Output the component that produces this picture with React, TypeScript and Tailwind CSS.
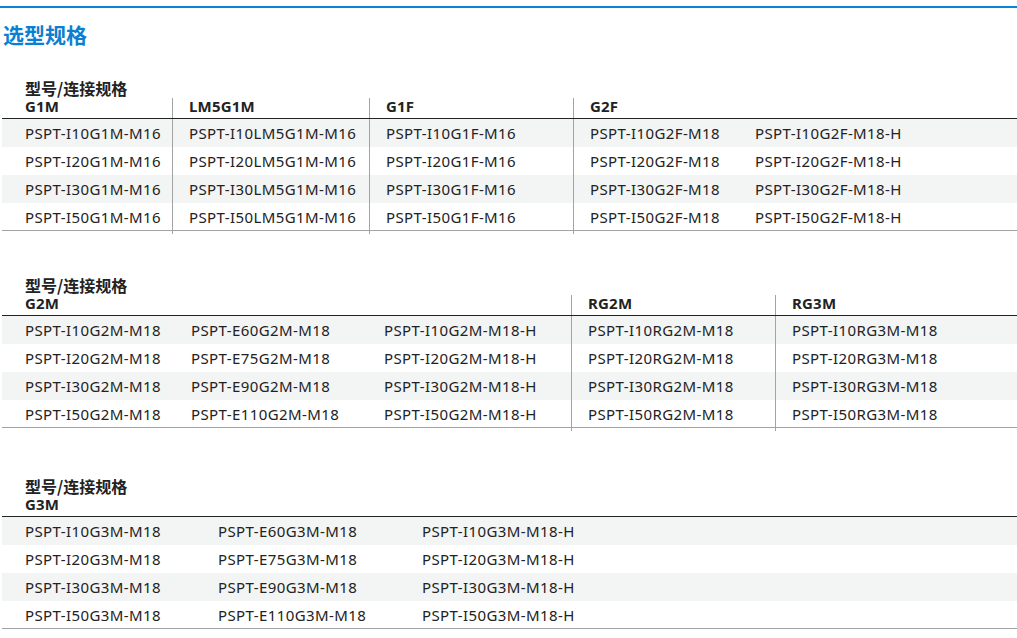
type HeadCell = { label: string; span?: number; border?: boolean };

interface SpecTableProps {
  grid: string;
  heads: HeadCell[];
  borders: boolean[];
  rows: string[][];
  className?: string;
}

const SpecTable: React.FC<SpecTableProps> = ({ grid, heads, borders, rows, className }) => {
  return (
    <div className={`ml-[2px] ${className ?? ""}`}>
      <div className="pl-[23px] font-['Noto_Sans_CJK_SC',sans-serif] text-[16px] font-bold leading-[19px] text-[#222]">
        型号/连接规格
      </div>
      <div className={`grid ${grid} h-[21px] border-b border-[#222]`}>
        {heads.map((h, i) => (
          <div
            key={i}
            className={`${h.span === 3 ? "col-span-3" : h.span === 2 ? "col-span-2" : ""} ${
              h.border ? "border-l border-[#a3a3a3] pl-[16px]" : i === 0 ? "pl-[23px]" : "pl-[17px]"
            } text-[15px] font-bold leading-[17px] tracking-[0.2px] text-[#222]`}
          >
            {h.label}
          </div>
        ))}
      </div>
      {rows.map((row, r) => (
        <div
          key={r}
          className={`grid ${grid} h-[28px] ${r % 2 === 0 ? "bg-[#f3f4f4]" : "bg-white"} ${
            r === rows.length - 1 ? "border-b border-[#a3a3a3]" : ""
          }`}
        >
          {row.map((cell, c) => (
            <div
              key={c}
              className={`${
                borders[c] ? "border-l border-[#a3a3a3] pl-[16px]" : c === 0 ? "pl-[23px]" : "pl-[17px]"
              } pb-[3px] text-[15px] leading-[28px] tracking-[0.4px] whitespace-nowrap text-[#222]`}
            >
              {cell}
            </div>
          ))}
        </div>
      ))}
    </div>
  );
};

const nums = ["10", "20", "30", "50"];
const ext = ["60", "75", "90", "110"];

export default function App() {
  return (
    <div className="min-h-[638px] w-[1017px] bg-white font-['Noto_Sans','Noto_Sans_CJK_SC',sans-serif]">
      <div className="pt-[6px]">
        <div className="h-[2px] bg-[#0a84d4]" />
      </div>
      <h1 className="mt-[13px] pl-[3px] text-[21px] font-bold leading-[28px] text-[#0b7fd1]">选型规格</h1>

      <SpecTable
        className="mt-[30px]"
        grid="grid-cols-[170px_197px_204px_165px_1fr]"
        heads={[
          { label: "G1M" },
          { label: "LM5G1M", border: true },
          { label: "G1F", border: true },
          { label: "G2F", border: true },
          { label: "" },
        ]}
        borders={[false, true, true, true, false]}
        rows={nums.map((n) => [
          `PSPT-I${n}G1M-M16`,
          `PSPT-I${n}LM5G1M-M16`,
          `PSPT-I${n}G1F-M16`,
          `PSPT-I${n}G2F-M18`,
          `PSPT-I${n}G2F-M18-H`,
        ])}
      />

      <SpecTable
        className="mt-[45px]"
        grid="grid-cols-[172px_193px_204px_204px_1fr]"
        heads={[
          { label: "G2M", span: 3 },
          { label: "RG2M", border: true },
          { label: "RG3M", border: true },
        ]}
        borders={[false, false, false, true, true]}
        rows={nums.map((n, i) => [
          `PSPT-I${n}G2M-M18`,
          `PSPT-E${ext[i]}G2M-M18`,
          `PSPT-I${n}G2M-M18-H`,
          `PSPT-I${n}RG2M-M18`,
          `PSPT-I${n}RG3M-M18`,
        ])}
      />

      <SpecTable
        className="mt-[49px]"
        grid="grid-cols-[199px_204px_1fr]"
        heads={[{ label: "G3M", span: 3 }]}
        borders={[false, false, false]}
        rows={nums.map((n, i) => [
          `PSPT-I${n}G3M-M18`,
          `PSPT-E${ext[i]}G3M-M18`,
          `PSPT-I${n}G3M-M18-H`,
        ])}
      />
    </div>
  );
}
